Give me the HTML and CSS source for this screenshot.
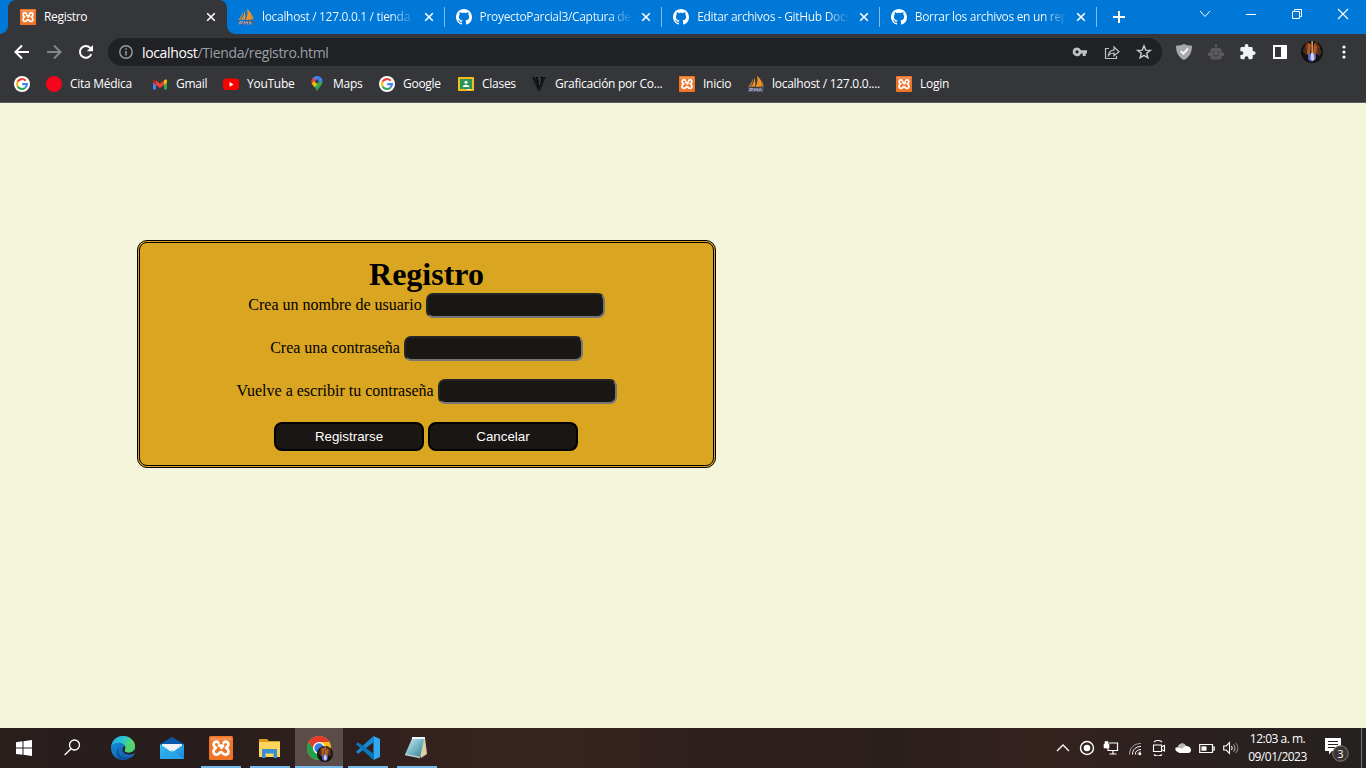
FILE: index.html
```html
<!DOCTYPE html>
<html lang="es">
<head>
<meta charset="utf-8">
<title>Registro</title>
<link rel="stylesheet" href="styles.css">
</head>
<body>
<svg class="defs" width="0" height="0">
  <defs>
    <linearGradient id="edgeBlue" x1="0" y1="0" x2="1" y2="1"><stop offset="0" stop-color="#1593db"/><stop offset="1" stop-color="#0b5aa8"/></linearGradient>
    <linearGradient id="edgeGreen" x1="0" y1="0" x2="1" y2="0.4"><stop offset="0" stop-color="#1fa8e4"/><stop offset="0.5" stop-color="#2cc4cf"/><stop offset="1" stop-color="#6be04c"/></linearGradient>
    <linearGradient id="mailBlue" x1="0" y1="0" x2="1" y2="1"><stop offset="0" stop-color="#36c2f5"/><stop offset="1" stop-color="#1b83da"/></linearGradient>
    <linearGradient id="note" x1="0" y1="0" x2="1" y2="1"><stop offset="0" stop-color="#d8f0f3"/><stop offset="0.55" stop-color="#71b3c2"/><stop offset="1" stop-color="#2f7888"/></linearGradient>
    <clipPath id="disc"><circle cx="11" cy="11" r="11"/></clipPath>
  </defs>
  <symbol id="xampp" viewBox="0 0 16 16"><rect width="16" height="16" rx="1" fill="#f07427"/><path d="M1 1h14v2H1z" fill="#f7a570" opacity=".6"/><path d="M6.300 4.500C5.500 3.400 3.200 3.500 3.100 5.500c0 1.300.7 1.900 1.600 2.400-1 .5-1.700 1.200-1.700 2.500.1 2.100 2.500 2.600 3.700 1.200.4-.6.7-.9 1.300-.9s.9.300 1.300.9c1.200 1.400 3.600.9 3.700-1.200 0-1.300-.7-2-1.700-2.500.9-.5 1.600-1.100 1.600-2.400-.1-2-2.400-2.100-3.200-1M6.600 6.400h2.800L8.200 8" fill="none" stroke="#fff" stroke-width="1.800" stroke-linejoin="round" stroke-linecap="round"/></symbol>
  <symbol id="pma" viewBox="0 0 16 16"><path d="M6.200 1.500c.3 3-.7 6.500-3.500 9.500l4.300-.5c.9-3 .4-6-.8-9zM9 0c4 2.800 5.200 6.500 4.900 10.500L7.500 11C9.600 7.500 9.900 4 9 0z" fill="#f29222"/><path d="M4.800 2C4 6 2.500 8.500.2 11l2-.200C4.200 8.500 5 6 4.800 2zM13 4c1.600 2 2.400 4 2.600 6.700l-1.300-.2c0-2-.300-4-1.300-6.500z" fill="#c58b3f"/><path d="M.3 11.200c4 1 10.400.9 15.400-.3l-.7 4.600H1z" fill="#555c7c"/><path d="M1 15.500l1-3h2.500l-.6 1.800H2M6 15.500l.5-3 1.300 1.800L9.200 12.500l.5 3M11 15.500l1-3 1.800 3" fill="none" stroke="#b5bbcf" stroke-width=".8"/></symbol>
  <symbol id="github" viewBox="0 0 16 16"><path fill="#fff" fill-rule="evenodd" d="M8 0C3.580 0 0 3.580 0 8c0 3.540 2.290 6.530 5.470 7.590.4.070.55-.17.55-.38 0-.19-.01-.82-.01-1.490-2.010.37-2.530-.49-2.690-.94-.09-.23-.48-.94-.82-1.130-.28-.15-.68-.52-.01-.53.63-.01 1.080.58 1.230.82.72 1.210 1.870.87 2.330.66.070-.52.28-.87.51-1.070-1.780-.2-3.640-.89-3.640-3.950 0-.87.31-1.590.82-2.150-.08-.2-.36-1.020.08-2.120 0 0 .67-.21 2.200.82.64-.18 1.320-.27 2-.27s1.360.09 2 .27c1.530-1.040 2.200-.82 2.200-.82.44 1.100.16 1.920.08 2.120.51.56.82 1.270.82 2.150 0 3.070-1.870 3.750-3.650 3.950.29.25.54.73.54 1.480 0 1.070-.01 1.930-.01 2.200 0 .21.150.46.55.38A8.010 8.010 0 0 0 16 8c0-4.420-3.580-8-8-8z"/></symbol>
  <symbol id="close" viewBox="0 0 10 10"><path d="M1.200 1.200l7.600 7.600M8.800 1.200L1.200 8.800" stroke="#fff" stroke-width="1.600"/></symbol>
  <symbol id="google" viewBox="0 0 16 16"><circle cx="8" cy="8" r="8" fill="#fff"/><g fill="none" stroke-width="2.100"><path d="M11.700 4.700A5 5 0 0 0 3.600 5.700" stroke="#ea4335"/><path d="M3.600 5.700a5 5 0 0 0 0 4.700" stroke="#fbbc05"/><path d="M3.600 10.400a5 5 0 0 0 7.700 1.300" stroke="#34a853"/><path d="M8.200 8.100H13c0 1.500-.6 2.700-1.700 3.600" stroke="#4285f4"/></g></symbol>
  <symbol id="guitar" viewBox="0 0 22 22"><g clip-path="url(#disc)"><rect width="22" height="22" fill="#15110f"/><path d="M6 0l3 5-2 9-5-3zM14 0l5 6-1 8-4-2z" fill="#6d3518"/><path d="M2 8l4-1-1 8zM17 7l4 3-3 6z" fill="#3a3029"/><path d="M7 2l3 1-1 12-3-2zM13 2l3 4-2 8-2-2z" fill="#b65a1c"/><path d="M10.400 0h1.500v13h-1.500z" fill="#d9a389"/><path d="M7 12l3 1h3l2-1v5c-1 4-6 5-8 1z" fill="#4c66c4"/><path d="M10 12h2.500l1 6-2 2-2-2z" fill="#d6cfdf"/></g></symbol>
</svg>

<header class="browser">
  <div class="tabstrip">
    <div class="tab tab-active"><svg class="fav"><use href="#xampp"/></svg><span class="title">Registro</span><svg class="x"><use href="#close"/></svg></div>
    <div class="tab"><svg class="fav"><use href="#pma"/></svg><span class="title">localhost / 127.0.0.1 / tienda /</span><svg class="x"><use href="#close"/></svg></div>
    <div class="tab"><svg class="fav"><use href="#github"/></svg><span class="title">ProyectoParcial3/Captura de p</span><svg class="x"><use href="#close"/></svg></div>
    <div class="tab"><svg class="fav"><use href="#github"/></svg><span class="title">Editar archivos - GitHub Docs</span><svg class="x"><use href="#close"/></svg></div>
    <div class="tab"><svg class="fav"><use href="#github"/></svg><span class="title">Borrar los archivos en un repo</span><svg class="x"><use href="#close"/></svg></div>
    <svg class="plus" viewBox="0 0 12 12"><path d="M6 0v12M0 6h12" stroke="#fff" stroke-width="2"/></svg>
    <div class="winctl">
      <svg width="12" height="12"><path d="M1 3l5 5.500L11 3" fill="none" stroke="#fff"/></svg>
      <svg width="12" height="12"><path d="M1 6.500h10" stroke="#fff"/></svg>
      <svg width="12" height="12"><path d="M1.500 3.500h7v7h-7zM3.500 3V1.500h7v7H9" fill="none" stroke="#fff"/></svg>
      <svg width="12" height="12"><path d="M1 1l10 10M11 1L1 11" stroke="#fff" stroke-width="1.100"/></svg>
    </div>
  </div>

  <div class="toolbar">
    <svg class="nav" viewBox="0 0 16 16"><path d="M15 8H2M8 1.500L1.500 8 8 14.500" fill="none" stroke="#fff" stroke-width="2"/></svg>
    <svg class="nav" viewBox="0 0 16 16"><path d="M1 8h13M8 1.500L14.500 8 8 14.500" fill="none" stroke="#85868a" stroke-width="2"/></svg>
    <svg class="nav" viewBox="0 0 16 16"><path d="M13.300 10.200A5.900 5.900 0 1 1 12.200 3.900l1.300 1.400" fill="none" stroke="#fff" stroke-width="2"/><path d="M15 1v6.200H8.800z" fill="#fff"/></svg>
    <div class="omnibox">
      <svg class="info" viewBox="0 0 14 14"><circle cx="7" cy="7" r="6.200" fill="none" stroke="#9aa0a6" stroke-width="1.400"/><path d="M7 6v4.500M7 3.300v1.500" stroke="#9aa0a6" stroke-width="1.500"/></svg>
      <span class="url"><b>localhost</b>/Tienda/registro.html</span>
      <svg class="act" viewBox="0 0 16 16"><path fill="#bdc1c6" fill-rule="evenodd" d="M5 3.500a4.300 4.300 0 0 1 4 2.700h6v3.200h-1.300V12H10.700V9.400H9A4.300 4.300 0 1 1 5 3.500zM5 6.200a1.600 1.600 0 1 0 0 3.200 1.600 1.600 0 0 0 0-3.200z"/></svg>
      <svg class="act" viewBox="0 0 16 16"><path d="M5 4.500H1.500v10h11V12M4.500 11.500C5 8 7 6.300 10 6.200V3l5 4.700-5 4V9c-2.500-.1-4 .6-5.500 2.500z" fill="none" stroke="#bdc1c6" stroke-width="1.200"/></svg>
      <svg class="act" viewBox="0 0 16 16"><path d="M8 1.800l1.700 4.300 4.600.3-3.600 2.900 1.200 4.500L8 11.300l-3.900 2.500 1.200-4.500-3.600-2.900 4.600-.3z" fill="none" stroke="#c9cbd0" stroke-width="1.400"/></svg>
    </div>
    <div class="extensions">
      <svg width="16" height="16"><path d="M8 0c2 1.200 5 1.700 8 1.700C16 9 13 13.500 8 16 3 13.500 0 9 0 1.700 3 1.700 6 1.200 8 0z" fill="#a8a9ab"/><path d="M4.800 7l2.600 2.700L12 4.500" fill="none" stroke="#fff" stroke-width="1.800"/></svg>
      <svg width="16" height="16"><path d="M8 1v4" stroke="#5a5a5b"/><circle cx="8" cy="1.300" r="1.200" fill="#5a5a5b"/><path d="M4.500 4h7a2 2 0 0 1 2 2v2.500H15a1 1 0 0 1 1 1V12h-2.500v1a2 2 0 0 1-2 2.500h-7a2 2 0 0 1-2-2.500v-1H0V9.500a1 1 0 0 1 1-1h1.500V6a2 2 0 0 1 2-2z" fill="#5a5a5b"/><circle cx="5.700" cy="8" r=".8" fill="#35363a"/><circle cx="10.300" cy="8" r=".8" fill="#35363a"/><path d="M5 11c2 1.200 4 1.200 6 0" fill="none" stroke="#35363a" stroke-width=".9"/></svg>
      <svg width="16" height="16" viewBox="1.500 1 22 22"><path fill="#f1f3f4" d="M20.500 11H19V7a2 2 0 0 0-2-2h-4V3.500a2.500 2.500 0 0 0-5 0V5H4a2 2 0 0 0-2 2v3.800h1.500a2.700 2.700 0 0 1 0 5.400H2V20c0 1.100.9 2 2 2h3.800v-1.500a2.700 2.700 0 0 1 5.400 0V22H17a2 2 0 0 0 2-2v-4h1.500a2.500 2.500 0 0 0 0-5z"/></svg>
      <svg width="16" height="16"><path fill="#fff" fill-rule="evenodd" d="M1 1h14v14H1zM3 3v10h6V3z"/></svg>
      <svg class="avatar"><use href="#guitar"/></svg>
      <svg class="dots" width="4" height="16"><g fill="#fff"><circle cx="2" cy="3" r="1.600"/><circle cx="2" cy="8" r="1.600"/><circle cx="2" cy="13" r="1.600"/></g></svg>
    </div>
  </div>

  <nav class="bookmarks">
    <a><svg><use href="#google"/></svg></a>
    <a><svg viewBox="0 0 16 16"><circle cx="8" cy="8" r="8" fill="#f3051b"/></svg><span>Cita Médica</span></a>
    <a><svg viewBox="0 0 16 16"><path d="M1 4.500v9h3V8z" fill="#4285f4"/><path d="M15 4.500v9h-3V8z" fill="#34a853"/><path d="M1 3.500L4 5v4L1 6.500z" fill="#c5221f"/><path d="M4 9V4.500l4 3 4-3V9l-4 3z" fill="#ea4335"/><path d="M12 4.500l1.500-1.200L15 4v2.500L12 9z" fill="#fbbc04"/></svg><span>Gmail</span></a>
    <a><svg viewBox="0 0 16 16"><rect y="2.500" width="16" height="11.500" rx="3" fill="#f00"/><path d="M6.500 6v4.800l4-2.400z" fill="#fff"/></svg><span>YouTube</span></a>
    <a class="maps"><svg viewBox="0 0 16 16"><path d="M2.500 5.500C2.500 10 8 11 8 16c1-5 5.500-6 5.500-10.500z" fill="#34a853"/><path d="M8 0a5.500 5.500 0 0 0-4.300 2.100L6 5.500 11.500 1.200A5.500 5.500 0 0 0 8 0z" fill="#4285f4"/><path d="M3.700 2.100A5.500 5.500 0 0 0 3 8l4-4.500z" fill="#ea4335"/><path d="M2.900 7.500c.6 1.500 1.700 2.300 2.700 3.700L10 6 7.500 3.800z" fill="#fbbc04"/><path d="M11.500 1.200c1.300.9 2 2.400 2 4.300L10 6 8 4z" fill="#4285f4"/><circle cx="8" cy="5.500" r="2" fill="#29416c"/></svg><span>Maps</span></a>
    <a><svg><use href="#google"/></svg><span>Google</span></a>
    <a><svg viewBox="0 0 16 16"><rect y="1" width="16" height="14" rx="1" fill="#f5bb18"/><path d="M2 3h12v10H2z" fill="#289755"/><circle cx="8" cy="6.300" r="1.500" fill="#fff"/><path d="M4.700 11c0-3 6.600-3 6.600 0z" fill="#fff"/><path d="M9 13h4v1H9z" fill="#eee"/></svg><span>Clases</span></a>
    <a><svg viewBox="0 0 16 16"><path d="M1 1h3l4 10 4-10h3L9 15H7z" fill="#17191c"/><path d="M5 1h2l1 8-1 3zM9 1h3L9 11z" fill="#060708"/><path d="M7 3l3-1-1 5-2 1" fill="none" stroke="#515258" stroke-width=".7"/></svg><span>Graficación por Co...</span></a>
    <a><svg><use href="#xampp"/></svg><span>Inicio</span></a>
    <a><svg><use href="#pma"/></svg><span>localhost / 127.0.0....</span></a>
    <a><svg><use href="#xampp"/></svg><span>Login</span></a>
  </nav>
</header>

<main class="page">
  <form class="card">
    <h1>Registro</h1>
    <div class="field"><label for="u">Crea un nombre de usuario</label><input id="u" type="text"></div>
    <div class="field"><label for="p">Crea una contraseña</label><input id="p" type="password"></div>
    <div class="field"><label for="r">Vuelve a escribir tu contraseña</label><input id="r" type="password"></div>
    <div class="buttons"><button type="button">Registrarse</button><button type="button">Cancelar</button></div>
  </form>
</main>

<footer class="taskbar">
  <div class="start"><svg width="16" height="16"><path d="M0 2.300L6.500 1.300v6.300H0zM7.500 1.200L16 0v7.600H7.500zM0 8.600h6.500v6.200L0 13.900zM7.500 8.600H16V16l-8.500-1.200z" fill="#fff"/></svg></div>
  <div class="search"><svg width="17" height="17"><circle cx="10.500" cy="6" r="5" fill="none" stroke="#fff" stroke-width="1.300"/><path d="M7 9.700L.7 16" stroke="#fff" stroke-width="1.400"/></svg></div>
  <div class="apps">
    <div class="app"><svg viewBox="0 0 24 24"><circle cx="12" cy="12" r="12" fill="url(#edgeBlue)"/><path d="M.3 10C2 2.500 7 0 12 0c7 0 12 5 12 10 0 4-3 6.500-6.500 6.500-2 0-4-.7-4-2 0-.9 1.100-1.300 1.100-3C14.600 8.500 11 6.700 7.500 6.700 4 6.700 1.500 8 .3 10z" fill="url(#edgeGreen)"/><path d="M10.500 10.500C5 12 7 21 14.500 21.500c3 0 6-1.500 7.500-4-2 5-7.500 7.500-12.500 6C4 21 4.500 12 10.500 10.500z" fill="#124f99"/><path d="M11 11.500c-1 2 0 5 3 6 2.700 1 6.500.9 9-1.500l1 1.500-2.500 3.500c-2 .7-5 .7-7.500-.3-4-1.800-5.500-6-3-9.200z" fill="#1765b4"/><path d="M13.700 10c1 1.500.2 3-.2 4 0 2 2 2.500 4 2.500 2.500 0 4.500-.8 5.800-2.500L24 16l-1.200 1.800c-3 1-7.800 1-10-1.300-2-2-1.600-5 .9-6.500z" fill="#271f1e"/><path d="M14 14.500c0 1.300 2 2 3.500 2C21 16.500 24 14 24 10l-3-3-6 3z" fill="#50d36e"/></svg></div>
    <div class="app"><svg viewBox="0 0 24 24"><path d="M0 8l12-7 12 7v4H0z" fill="#0959ac"/><path d="M2 8h20v8H2z" fill="#f1f3f6"/><path d="M0 8l12 8.500L24 8v15H0z" fill="url(#mailBlue)"/><path d="M0 23l12-9 12 9z" fill="#2ba9eb" opacity=".7"/></svg></div>
    <div class="app open"><svg viewBox="0 0 16 16"><use href="#xampp"/></svg></div>
    <div class="app open"><svg viewBox="0 0 24 24"><path d="M1 3h8l2 2h11v16H1z" fill="#d99c21"/><path d="M1 6h21v15H1z" fill="#ffd55c"/><path d="M4 13h15v9h-3.500v-4.500h-8V22H4z" fill="#3a8fd3"/></svg></div>
    <div class="app open current"><svg viewBox="0 0 24 24"><circle cx="12" cy="12" r="12" fill="#fbc116"/><path d="M1.600 6A12 12 0 0 1 22.400 6H12L7 15z" fill="#e33b2e"/><path d="M1.600 6A12 12 0 0 0 12 24l5-9-10-1z" fill="#20a04c"/><circle cx="12" cy="12" r="6" fill="#fff"/><circle cx="12" cy="12" r="4.700" fill="#397ddf"/></svg><svg class="profile" viewBox="0 0 22 22"><use href="#guitar"/></svg></div>
    <div class="app open"><svg viewBox="0 0 24 24"><path d="M17.500 0L24 3v18l-6.500 3z" fill="#32aaf2"/><path d="M17.500 0L0 15.800l2 2L18 6z" fill="#168bd6"/><path d="M17.500 24L0 8.200l2-2L18 18z" fill="#0877bd"/></svg></div>
    <div class="app open"><svg viewBox="0 0 24 24"><path d="M8 1l12 1 2 16-6 4z" fill="#dad0a7"/><path d="M7.500 1.500h12L15 21.500l-15-3z" fill="url(#note)"/><path d="M7 2h13" stroke="#ecf8f7" stroke-width="2"/><path d="M0 18.500l15 3" stroke="#bdcccc" stroke-width="1.500"/></svg></div>
  </div>
  <div class="tray">
    <svg viewBox="0 0 16 16"><path d="M2 11l6-6 6 6" fill="none" stroke="#fff" stroke-width="1.300"/></svg>
    <svg viewBox="0 0 16 16"><circle cx="8" cy="8" r="6.500" fill="none" stroke="#fff" stroke-width="1.400"/><circle cx="8" cy="8" r="3.300" fill="#fff"/></svg>
    <svg viewBox="0 0 16 16"><path d="M6 3h8.500v7.500H5V8M10 10.500v4M6.500 14h7" fill="none" stroke="#fff" stroke-width="1.200"/><path d="M1 4h5v4H1zM2 4V1.500h3V4" fill="#fff" stroke="#fff" stroke-width=".6"/></svg>
    <svg viewBox="0 0 16 16"><g fill="none" stroke="#fff"><path d="M2.500 14.500C2.500 8 7 3.500 14 3.500" stroke="#aaa5a4"/><path d="M5.500 14.500C5.500 9.500 9 6.500 14 6.500M8.300 14.500c0-3 2-5 5.700-5M11 14.500c0-1.500 1-2.500 3-2.500"/></g><circle cx="13" cy="14" r="1.300" fill="#fff"/></svg>
    <svg viewBox="0 0 16 16"><path d="M2.500 5h8v6.500h-8zM10.500 7l3-1.500V11l-3-1.500M3 2C5 0 9 0 11 2M3 14.500c2 2 6 2 8 0" fill="none" stroke="#fff" stroke-width="1.100"/></svg>
    <svg viewBox="0 0 16 16"><path d="M3 12C-1 11 0 7 3 7c1-4 6-5 8-1 3-.5 5 2 5 4 0 2-1 3-3 3H4z" fill="#fff"/><path d="M0 9c0-1.500 1.500-2.300 3-2 1-4 6-5 8-1-2 0-2.500 1-3 2.500C5 7.500 2 8 0 9z" fill="#b9b6b5"/></svg>
    <svg viewBox="0 0 16 16"><path d="M.7 4.500h12.800v8H.7zM14 7h1.200v3H14" fill="none" stroke="#fff" stroke-width="1.200"/><path d="M2.500 6.300h5v4.400h-5z" fill="#fff"/></svg>
    <svg viewBox="0 0 16 16"><g fill="none" stroke="#fff" stroke-width="1.100"><path d="M.7 6h2.500L6.500 2.700v10.600L3.200 10H.7zM8.500 6q1.500 2 0 4"/><path d="M10.500 4.500q3 3.500 0 7" stroke="#aaa"/><path d="M12.700 3q4.500 5 0 10" stroke="#85807f"/></g></svg>
    <div class="clock"><span>12:03 a. m.</span><span>09/01/2023</span></div>
    <svg class="notice" viewBox="0 0 26 26"><path d="M1 1h16v13H8l-3 3.500V14H1z" fill="#fff"/><path d="M4 4.500h10M4 7.500h10M4 10.500h7" stroke="#2a2120" stroke-width="1.200"/><circle cx="16.500" cy="16.500" r="7.700" fill="#3b3433" stroke="#858080"/><text class="count" x="16.500" y="20.500" text-anchor="middle">3</text></svg>
    <i class="desktop"></i>
  </div>
</footer>
</body>
</html>
```

FILE: styles.css
```css
* { box-sizing: border-box; }
body { margin: 0; width: 1366px; height: 768px; overflow: hidden; display: flex; flex-direction: column; background: beige; font-family: "Liberation Serif", serif; }
svg { display: block; flex: none; }
.defs { position: absolute; }

.browser { height: 103px; flex: none; background: #35363a; border-bottom: 1px solid #5b5c60; color: #fff; font: 12px "Open Sans", sans-serif; }
.tabstrip { height: 34px; display: flex; background: #0078d7; padding-left: 8px; }
.tab { width: 217.600px; height: 34px; display: flex; align-items: center; padding: 0 11px; position: relative; }
.tab-active { width: 219px; background: #35363a; border-radius: 8px 8px 0 0; padding-left: 12px; padding-right: 11px; }
.tab-active::before, .tab-active::after { content: ""; position: absolute; bottom: 0; width: 8px; height: 8px; }
.tab-active::before { left: -8px; background: radial-gradient(circle at 0 0, #0078d7 7.500px, #35363a 8px); }
.tab-active::after { right: -8px; background: radial-gradient(circle at 100% 0, #0078d7 7.500px, #35363a 8px); }
.tab:not(.tab-active)::after { content: ""; position: absolute; right: 0; top: 7px; width: 1px; height: 20px; background: #80bbeb; }
.fav { width: 16px; height: 16px; margin-right: 8px; }
.title { flex: 1; white-space: nowrap; letter-spacing: -.32px; line-height: 18px; min-width: 0; margin-right: 9px; }
.tab:not(.tab-active) .title { color: transparent; background: linear-gradient(90deg, #fff calc(100% - 24px), rgba(255, 255, 255, 0)); -webkit-background-clip: text; background-clip: text; }
.x { width: 10px; height: 10px; }
.plus { width: 12px; height: 12px; margin: 11px 0 0 16px; }
.winctl { margin: 8px 17px 0 auto; display: flex; gap: 34px; }

.toolbar { height: 36px; display: flex; align-items: center; padding-left: 14px; }
.nav { width: 16px; height: 16px; margin-right: 16px; }
.omnibox { width: 1054px; height: 28px; margin-left: -2px; padding: 0 10px 0 11px; border-radius: 14px; background: #202124; display: flex; align-items: center; }
.info { width: 14px; height: 14px; margin-right: 9px; }
.url { flex: 1; font-size: 14px; letter-spacing: -.36px; color: #9aa0a6; }
.url b { font-weight: 400; color: #fff; }
.act { width: 16px; height: 16px; margin-left: 16px; }
.extensions { display: flex; align-items: center; gap: 16px; margin-left: 14px; }
.avatar { width: 22px; height: 22px; margin: 0 -3px; }
.dots { margin-left: 6px; }

.bookmarks { height: 28px; display: grid; grid-template-columns: 32px 106px 71px 86px 70px 79px 73px 148px 69px 148px 100px; padding-left: 14px; }
.bookmarks a { display: flex; align-items: center; gap: 8px; white-space: nowrap; letter-spacing: -.27px; }
.bookmarks span { padding-bottom: 1px; }
.bookmarks svg { width: 16px; height: 16px; }

.page { height: 625px; flex: none; background: beige; padding: 137px 0 0 137px; }
.card { width: 579px; height: 228px; margin: 0; padding-top: 14px; background: goldenrod; border: 3px double #000; border-radius: 10px; color: #000; }
.card h1 { margin: 0; height: 36px; line-height: 35px; font-size: 32px; text-align: center; }
.field { height: 25px; margin-bottom: 18px; display: flex; justify-content: center; align-items: center; gap: 4px; font-size: 16px; }
.field label { padding-bottom: 2px; }
.field input { width: 179px; height: 25px; margin: 0; border: 2px solid; border-color: #242524 #767676 #767676 #242524; border-radius: 7px; background: #1a1614; color: #fff; }
.buttons { display: flex; justify-content: center; gap: 4px; padding-right: 1px; }
.buttons button { width: 150px; height: 29px; padding: 0; border: 2px solid #000; border-radius: 8px; background: #1a1614; color: #fff; font: 13.333px "Liberation Sans", Arial, sans-serif; }

.taskbar { height: 40px; flex: none; display: flex; background: linear-gradient(90deg, #281f1d 0, #271d1c 200px, #33211e 400px, #38241f 530px, #2f201d 700px, #2b1f1d 900px, #35221f 1040px, #2a2120 1200px, #252120 100%); color: #fff; font: 12px "Open Sans", sans-serif; }
.start { width: 48px; padding: 12px 0 0 16px; }
.search { width: 51px; padding: 11px 0 0 16px; }
.apps { display: flex; gap: 1px; }
.app { width: 48px; height: 40px; display: flex; justify-content: center; align-items: center; position: relative; }
.app > svg { width: 24px; height: 24px; }
.open::after { content: ""; position: absolute; bottom: 0; left: 4px; right: 4px; height: 2px; background: #76b9ed; }
.current { background: #5b4c49; }
.current::after { left: 0; right: 0; }
.app > .profile { position: absolute; left: 22px; top: 18px; width: 16px; height: 16px; }
.tray { margin-left: auto; display: flex; align-items: center; gap: 8px; padding-right: 4px; }
.tray > svg { width: 16px; height: 16px; }
.clock { width: 62px; margin-left: -1px; padding-left: 1px; text-align: center; line-height: 18px; letter-spacing: -.5px; display: flex; flex-direction: column; white-space: nowrap; }
.tray > .notice { width: 26px; height: 26px; margin: 4px 0 0 8px; }
.count { font: 11px "Open Sans", sans-serif; fill: #fff; }
.desktop { width: 1px; height: 40px; margin-left: 3px; background: #777170; }
```
